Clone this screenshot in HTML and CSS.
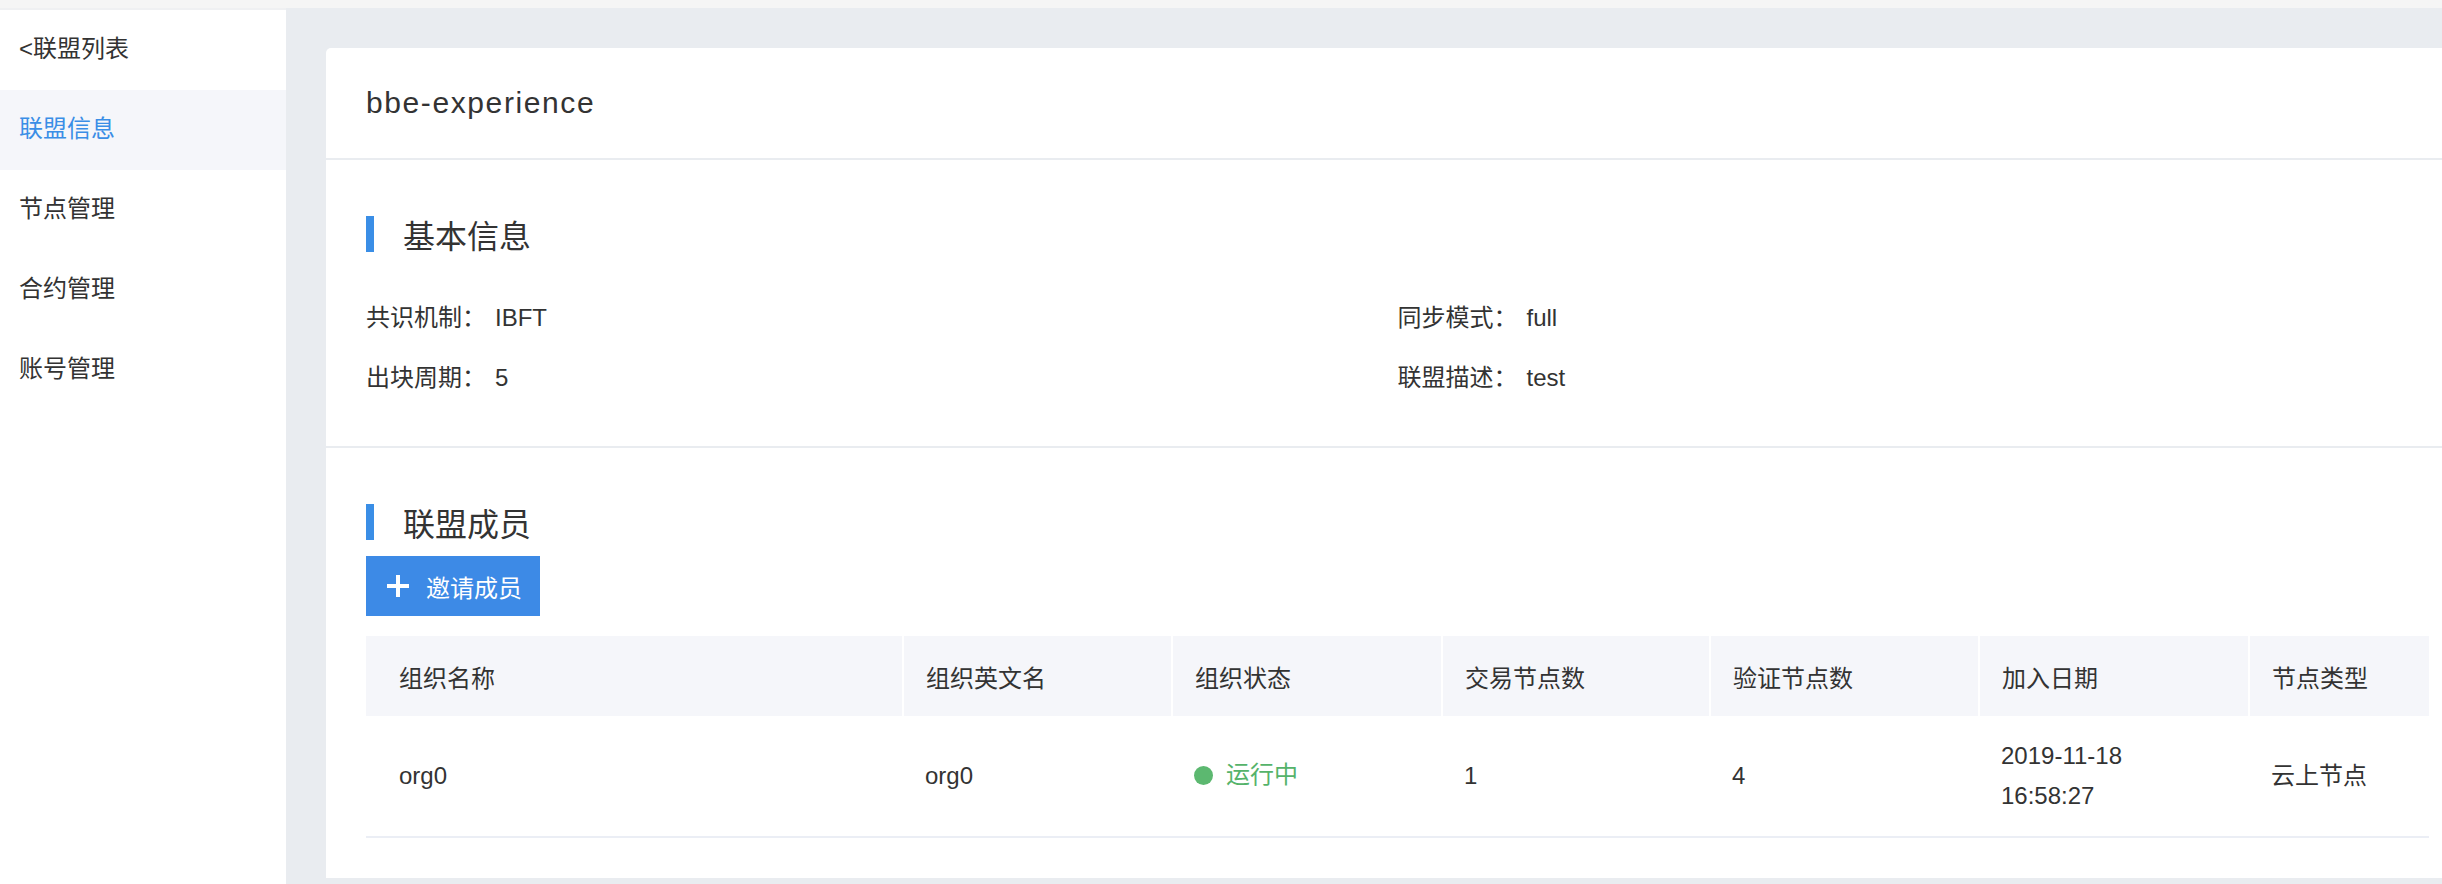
FILE: index.html
```html
<!DOCTYPE html>
<html lang="zh-CN">
<head>
<meta charset="utf-8">
<title>联盟信息</title>
<link rel="stylesheet" href="styles.css">
</head>
<body>
<div class="topbar"></div>
<div class="layout">
  <aside class="sidebar">
    <div class="nav-item">&lt;联盟列表</div>
    <div class="nav-item active">联盟信息</div>
    <div class="nav-item">节点管理</div>
    <div class="nav-item">合约管理</div>
    <div class="nav-item">账号管理</div>
  </aside>
  <main class="main">
    <div class="card">
      <div class="card-head">bbe-experience</div>
      <section class="block info-block">
        <h2 class="sec-title"><span class="bar"></span>基本信息</h2>
        <div class="info-grid">
          <div class="info-item">共识机制：<span class="val">IBFT</span></div>
          <div class="info-item">同步模式：<span class="val">full</span></div>
          <div class="info-item">出块周期：<span class="val">5</span></div>
          <div class="info-item">联盟描述：<span class="val">test</span></div>
        </div>
      </section>
      <section class="block member-block">
        <h2 class="sec-title"><span class="bar"></span>联盟成员</h2>
        <button class="btn-invite">
          <svg class="plus" width="24" height="24" viewBox="0 0 24 24"><path d="M12 1v22M1 12h22" stroke="#fff" stroke-width="4" fill="none"/></svg>
          <span>邀请成员</span>
        </button>
        <table class="members">
          <thead>
            <tr>
              <th class="c1">组织名称</th>
              <th class="c2">组织英文名</th>
              <th class="c3">组织状态</th>
              <th class="c4">交易节点数</th>
              <th class="c5">验证节点数</th>
              <th class="c6">加入日期</th>
              <th class="c7">节点类型</th>
            </tr>
          </thead>
          <tbody>
            <tr>
              <td class="c1">org0</td>
              <td>org0</td>
              <td><span class="status"><span class="dot"></span>运行中</span></td>
              <td>1</td>
              <td>4</td>
              <td>2019-11-18<br>16:58:27</td>
              <td>云上节点</td>
            </tr>
          </tbody>
        </table>
      </section>
    </div>
  </main>
</div>
</body>
</html>
```
FILE: styles.css
```css
html, body {
  margin: 0;
  padding: 0;
  width: 2442px;
  height: 884px;
  overflow: hidden;
  background: #e9ecf0;
  font-family: "Liberation Sans", "Noto Sans CJK SC", sans-serif;
  color: #333;
}

.topbar {
  height: 8px;
  background: #f5f5f5;
}

.layout {
  display: flex;
  height: 876px;
}

.sidebar {
  width: 286px;
  flex: none;
  background: #fff;
  border-top: 2px solid #eff0f2;
  box-sizing: border-box;
}

.nav-item {
  height: 80px;
  line-height: 78px;
  padding-left: 19px;
  font-size: 24px;
  color: #333;
}

.nav-item.active {
  background: #f5f6fa;
  color: #3a8ee6;
}

.main {
  flex: 1;
  min-width: 0;
  padding: 40px 0 0 40px;
  box-sizing: border-box;
}

.card {
  margin-right: -27px;
  display: flex;
  flex-direction: column;
  gap: 2px;
  border-radius: 5px 0 0 0;
  overflow: hidden;
}

.card-head {
  height: 110px;
  line-height: 110px;
  padding-left: 40px;
  background: #fff;
  font-size: 30px;
  letter-spacing: 1.6px;
  color: #333;
}

.block {
  background: #fff;
  padding: 56px 40px 0 40px;
}

.info-block {
  height: 286px;
  box-sizing: border-box;
}

.member-block {
  height: 430px;
  box-sizing: border-box;
}

.sec-title {
  display: flex;
  align-items: center;
  margin: 0;
  height: 36px;
  font-size: 32px;
  font-weight: normal;
  color: #333;
}

.bar {
  width: 8px;
  height: 36px;
  background: #3a8ee6;
  margin-right: 29px;
  flex: none;
}

.info-grid {
  display: grid;
  grid-template-columns: 1fr 1fr;
  row-gap: 20px;
  margin-top: 46px;
}

.info-item {
  height: 40px;
  line-height: 40px;
  font-size: 24px;
  color: #333;
}

.val {
  margin-left: 9px;
}

.btn-invite {
  display: flex;
  align-items: center;
  gap: 16px;
  margin-top: 16px;
  height: 60px;
  width: 174px;
  padding: 0 0 0 20px;
  border: none;
  background: #3d8ae6;
  color: #fff;
  font-family: "Liberation Sans", "Noto Sans CJK SC", sans-serif;
  font-size: 24px;
  box-sizing: border-box;
}

.plus {
  flex: none;
}

.members {
  margin-top: 20px;
  width: 2063px;
  table-layout: fixed;
  border-collapse: collapse;
  font-size: 24px;
  color: #333;
}

.members th {
  height: 80px;
  background: #f5f6fa;
  font-weight: normal;
  text-align: left;
  padding: 0 0 0 22px;
  border-right: 2px solid #fff;
  box-sizing: border-box;
}

.members th:last-child {
  border-right: none;
}

.members td {
  height: 120px;
  padding: 20px 0 20px 22px;
  line-height: 40px;
  border-bottom: 2px solid #ebeef5;
  box-sizing: border-box;
}

.members .c1 { width: 537px; padding-left: 33px; }
.members .c2 { width: 269px; }
.members .c3 { width: 270px; }
.members .c4 { width: 268px; }
.members .c5 { width: 269px; }
.members .c6 { width: 270px; }
.members .c7 { width: 180px; }

.status {
  display: inline-flex;
  align-items: center;
  color: #55b36a;
}

.dot {
  flex: none;
  width: 19px;
  height: 19px;
  border-radius: 50%;
  background: #5cb870;
  margin-right: 13px;
}
```
